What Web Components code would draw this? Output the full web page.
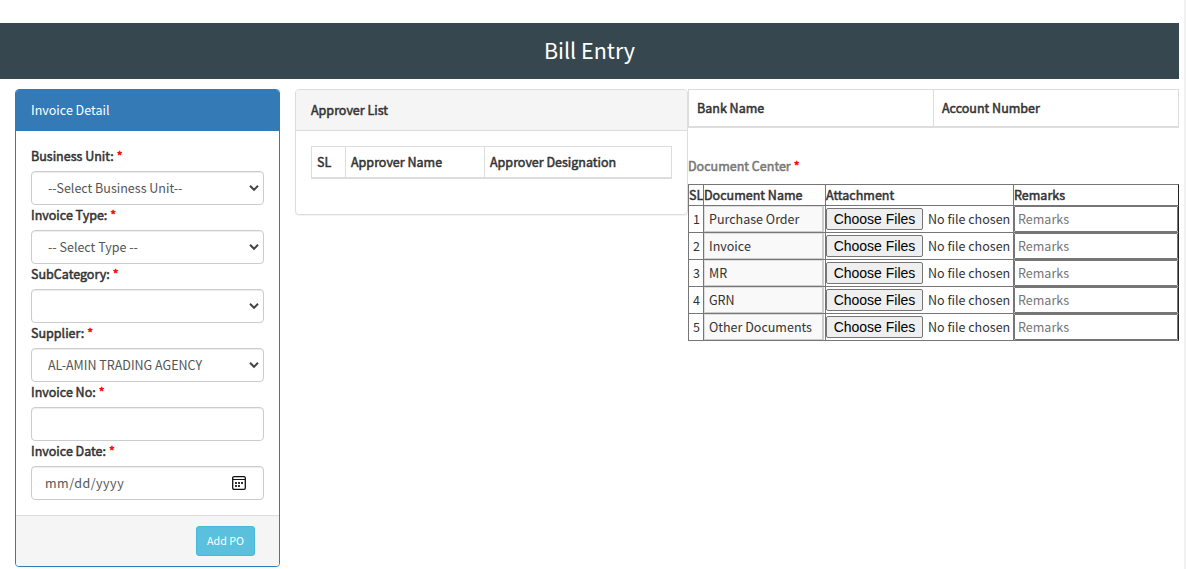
<!DOCTYPE html>
<html lang="en"><head><meta charset="utf-8"><title>Bill Entry</title>
<style>
body{margin:0;background:#fff;color:#333;font:12.53px/20px "Noto Sans CJK SC","Noto Sans",sans-serif;height:569px;overflow:hidden}
</style></head><body>
<bill-page></bill-page>
<script>
const define=(name,html,setup)=>customElements.define(name,class extends HTMLElement{
  constructor(){super();const t=document.createElement('template');
    t.innerHTML='<style>*{box-sizing:border-box}:host{box-sizing:border-box;display:block}</style>'+html;
    this.attachShadow({mode:'open'}).append(t.content.cloneNode(true));if(setup)setup(this,this.shadowRoot)}
});
define('bold-text',`<style>:host{display:inline-block;white-space:nowrap;-webkit-text-stroke:.5px currentColor}</style><slot></slot>`);
define('page-title',`<style>:host{height:56px;background:#37474f;color:#fff;text-align:center;font-size:21.5px;line-height:54px}</style><slot></slot>`);
define('side-panel',`<style>
:host{border:1px solid var(--edge,#ddd);border-radius:4px;background:#fff;box-shadow:0 1px 1px rgba(0,0,0,.05);overflow:hidden}
header{height:41px;padding:0 15px;line-height:39px;background:var(--head,#f5f5f5);color:var(--ink,#333);border-bottom:1px solid var(--edge,#ddd)}
main{padding:15px}
</style><header><slot name="title"></slot></header><main><slot></slot></main><slot name="footer"></slot>`);
define('form-field',`<style>
:host{height:59px}
.label{height:25px;line-height:19px;white-space:nowrap}
.label i{font-style:normal;color:red;margin-left:3px}
.box{height:34px;border:1px solid #ccc;border-radius:4px;box-shadow:inset 0 1px 1px rgba(0,0,0,.075);display:flex;align-items:center;justify-content:space-between;padding:0 4px 0 16px;color:#555}
:host([kind=date]) .box{padding:0 17px 0 13px;letter-spacing:.5px}
.icon{display:none;flex:none}
:host([kind=select]) .arrow,:host([kind=date]) .cal{display:block}
</style><div class="label"><bold-text><slot name="label"></slot></bold-text><bold-text><i>*</i></bold-text></div>
<div class="box"><span><slot></slot></span>
<svg class="icon arrow" width="10" height="8" viewBox="0 0 10 8"><path d="M1 1.8l4 4 4-4" fill="none" stroke="#444" stroke-width="2"/></svg>
<svg class="icon cal" width="14" height="14" viewBox="0 0 14 14"><rect x=".7" y=".7" width="12.6" height="12.6" rx="1.3" fill="none" stroke="#111" stroke-width="1.3"/><path d="M1 3.5h12" stroke="#111"/><path d="M6 6h2v2H6zM9 6h2v2H9zM3 9h2v2H3zM6 9h2v2H6zM3 6h2v2H3z" fill="#333"/></svg></div>`);
define('panel-footer',`<style>:host{height:51px;background:#f5f5f5;border-top:1px solid #ddd;display:flex;justify-content:flex-end;padding:10px 24px 0}
button{width:59px;height:30px;border:1px solid #46b8da;border-radius:3px;background:#5bc0de;color:#fff;font:inherit;font-size:10.74px;padding:0;line-height:26px}</style><button><slot></slot></button>`);
define('head-row',`<style>:host{display:grid;grid-template-columns:var(--cols);border:solid #ddd;border-width:1px 1px 2px 0;height:var(--h)}
::slotted(*){border-left:1px solid #ddd;padding-left:var(--pad,5px);line-height:calc(var(--h) - 3px)}</style><slot></slot>`);
define('doc-row',`<style>
:host{display:grid;grid-template-columns:15px 122px 188px 1fr;height:27px;border-bottom:1px solid #767676;border-right:1px solid #222}
.c{border-left:1px solid #767676;display:flex;align-items:center;white-space:nowrap;min-width:0}
.n{padding-left:4px}
.name{flex:1;height:26px;background:#f9f9f9;border:1px solid #ddd;border-right:2px solid #ccc;border-bottom:1px solid #ccc;padding-left:4px;line-height:24px;margin-right:1px}
button{width:97px;height:22px;border:1px solid #767676;border-radius:2px;background:#efefef;color:#000;font:14px/20px "Liberation Sans",sans-serif;padding:0;margin-right:5px;flex:none}
.r{flex:1;height:26px;border:1px solid #767676;border-radius:1px;padding-left:3px;line-height:24px;color:#757575}
</style><div class="c n"><slot name="n"></slot></div><div class="c"><div class="name"><slot></slot></div></div><div class="c"><button>Choose Files</button><span>No file chosen</span></div><div class="c"><div class="r">Remarks</div></div>`);
define('doc-head',`<style>:host{display:grid;grid-template-columns:15px 122px 188px 1fr;height:22px;border:solid #767676;border-width:1px 0;border-right:1px solid #222}
div{border-left:1px solid #767676;line-height:20px;white-space:nowrap}</style>
<div><bold-text>SL</bold-text></div><div><bold-text>Document Name</bold-text></div><div><bold-text>Attachment</bold-text></div><div><bold-text>Remarks</bold-text></div>`);
define('bill-page',`<style>
:host{height:569px;padding-top:23px;border-right:2px solid #f1f1f1}
page-title{width:1179px}
.cols{display:flex;align-items:flex-start;width:1179px;padding:10px 0 0 15px}
.inv{--edge:#337ab7;--head:#337ab7;--ink:#fff;width:265px;height:478px;margin-right:15px}
.app{width:393px;height:126px}
.right{width:491px}
.dc{color:#777;height:56px;padding-top:28px;line-height:20px}
.dc i{font-style:normal;color:red;margin-left:3px}
</style>
<page-title>Bill Entry</page-title>
<div class="cols">
<side-panel class="inv"><span slot="title">Invoice Detail</span>
<form-field kind="select"><span slot="label">Business Unit:</span>--Select Business Unit--</form-field>
<form-field kind="select"><span slot="label">Invoice Type:</span>-- Select Type --</form-field>
<form-field kind="select"><span slot="label">SubCategory:</span></form-field>
<form-field kind="select"><span slot="label">Supplier:</span>AL-AMIN TRADING AGENCY</form-field>
<form-field><span slot="label">Invoice No:</span></form-field>
<form-field kind="date"><span slot="label">Invoice Date:</span>mm/dd/yyyy</form-field>
<panel-footer slot="footer">Add PO</panel-footer></side-panel>
<side-panel class="app"><bold-text slot="title">Approver List</bold-text>
<head-row style="--cols:34px 139px 1fr;--h:33px"><div><bold-text>SL</bold-text></div><div><bold-text>Approver Name</bold-text></div><div><bold-text>Approver Designation</bold-text></div></head-row></side-panel>
<div class="right">
<head-row style="--cols:245px 1fr;--h:39px;--pad:8px"><div><bold-text>Bank Name</bold-text></div><div><bold-text>Account Number</bold-text></div></head-row>
<div class="dc"><bold-text>Document Center</bold-text><bold-text><i>*</i></bold-text></div>
<doc-head></doc-head>
<doc-row><span slot="n">1</span>Purchase Order</doc-row><doc-row><span slot="n">2</span>Invoice</doc-row><doc-row><span slot="n">3</span>MR</doc-row><doc-row><span slot="n">4</span>GRN</doc-row><doc-row><span slot="n">5</span>Other Documents</doc-row>
</div></div>`);
</script></body></html>
